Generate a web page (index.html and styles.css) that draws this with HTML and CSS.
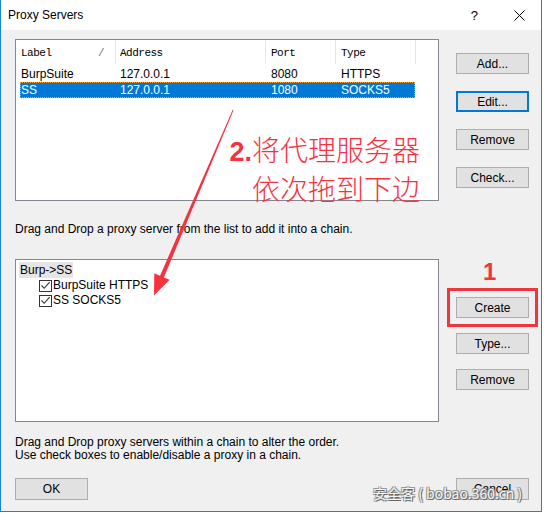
FILE: index.html
```html
<!DOCTYPE html>
<html>
<head>
<meta charset="utf-8">
<link rel="stylesheet" href="styles.css">
</head>
<body>
<div class="window">
  <div class="titlebar">
    <span class="title">Proxy Servers</span>
    <span class="help">?</span>
    <svg class="close" width="11" height="11" viewBox="0 0 11 11"><path d="M0.5 0.5 L10.5 10.5 M10.5 0.5 L0.5 10.5" stroke="#000" stroke-width="1" fill="none"/></svg>
  </div>
  <div class="client">
    <div class="row top">
      <div class="list list1">
        <div class="lv-header">
          <div class="hcol c1">Label<span class="sort">/</span></div>
          <div class="hcol c2">Address</div>
          <div class="hcol c3">Port</div>
          <div class="hcol c4">Type</div>
        </div>
        <div class="lv-row">
          <span>BurpSuite</span><span>127.0.0.1</span><span>8080</span><span>HTTPS</span>
        </div>
        <div class="lv-row selected">
          <span>SS</span><span>127.0.0.1</span><span>1080</span><span>SOCKS5</span>
        </div>
      </div>
      <div class="btncol btncol-top">
        <button class="btn">Add...</button>
        <button class="btn default">Edit...</button>
        <button class="btn">Remove</button>
        <button class="btn">Check...</button>
      </div>
    </div>
    <p class="hint hint1">Drag and Drop a proxy server from the list to add it into a chain.</p>
    <div class="row bottom">
      <div class="list list2">
        <div class="tree-node"><span class="node-label">Burp-&gt;SS</span></div>
        <div class="tree-child">
          <span class="cb"><svg width="11" height="11" viewBox="0 0 11 11"><path d="M1.5 5.5 L4.2 8.3 L9.6 2.2" stroke="#333" stroke-width="1.1" fill="none"/></svg></span>
          <span>BurpSuite HTTPS</span>
        </div>
        <div class="tree-child">
          <span class="cb"><svg width="11" height="11" viewBox="0 0 11 11"><path d="M1.5 5.5 L4.2 8.3 L9.6 2.2" stroke="#333" stroke-width="1.1" fill="none"/></svg></span>
          <span>SS SOCKS5</span>
        </div>
      </div>
      <div class="btncol btncol-bottom">
        <button class="btn create">Create</button>
        <button class="btn">Type...</button>
        <button class="btn">Remove</button>
      </div>
    </div>
    <div class="hint hint2">
      <div>Drag and Drop proxy servers within a chain to alter the order.</div>
      <div>Use check boxes to enable/disable a proxy in a chain.</div>
    </div>
    <div class="row footer">
      <button class="btn">OK</button>
      <button class="btn">Cancel</button>
    </div>
  </div>

  <svg class="arrow" width="544" height="513" viewBox="0 0 544 513">
    <polygon points="233.5,110.2 163.9,277.4 169.5,279.8 154,295.5 154.3,273.3 160.0,275.8 232.7,109.8" fill="#f5333f"/>
  </svg>
  <div class="note">
    <div><span class="num">2.</span>将代理服务器</div>
    <div>依次拖到下边</div>
  </div>
  <div class="note1">1</div>
  <div class="watermark">安全客 ( bobao.360.cn )</div>
</div>
</body>
</html>
```

FILE: styles.css
```css
* { box-sizing: border-box; }
html, body { margin: 0; padding: 0; background: #ffffff; }
body { font-family: "Liberation Sans", Arial, sans-serif; font-size: 12px; color: #000; }

.window {
  position: relative;
  width: 542px;
  height: 512px;
  border: 1px solid #1883d7;
  border-top: none;
  background: #f0f0f0;
  overflow: hidden;
}

.titlebar {
  height: 30px;
  background: #ffffff;
  display: flex;
  align-items: center;
  padding-left: 7px;
}
.title { font-size: 12px; flex: 1; }
.help { font-size: 13px; margin-right: 36px; }
.close { margin-right: 16px; }

.client { padding: 9px 0 0 14px; }

.row { display: flex; }

.list {
  width: 424px;
  background: #ffffff;
  border: 1px solid #828790;
}
.list1 { height: 162px; }
.list2 { height: 163px; padding-top: 2px; }

.btncol { display: flex; flex-direction: column; margin-left: 17px; }
.btncol-top { padding-top: 14px; gap: 17px; }
.btncol-bottom { padding-top: 38px; gap: 15px; }

.btn {
  width: 73px;
  height: 21px;
  background: #e1e1e1;
  border: 1px solid #adadad;
  font-family: "Liberation Sans", Arial, sans-serif;
  font-size: 12px;
  color: #000;
  padding: 0;
  margin: 0;
}
.btn.default { border: 2px solid #0078d7; }

.lv-header { display: flex; height: 24px; }
.hcol {
  position: relative;
  font-family: "Liberation Mono", monospace;
  font-size: 11px;
  letter-spacing: -0.5px;
  padding-left: 6px;
  padding-top: 7px;
  border-right: 1px solid #e5e5e5;
  height: 24px;
}
.hcol.c1 { width: 100px; padding-left: 5px; }
.hcol.c2 { width: 150px; padding-left: 4px; }
.hcol.c3 { width: 70px; padding-left: 5px; }
.hcol.c4 { width: 80px; padding-left: 5px; }
.sort { position: absolute; left: 82px; top: 7px; color: #777; }

.lv-row {
  display: grid;
  grid-template-columns: 99px 151px 70px 1fr;
  width: 395px;
  height: 16px;
  margin-left: 4px;
  padding-left: 1px;
  line-height: 16px;
  font-size: 12px;
}
.lv-header + .lv-row { margin-top: 2px; }
.lv-row.selected {
  background: #0078d7;
  color: #ffffff;
  outline: 1px dotted #f3a033;
  outline-offset: -1px;
}

.hint { margin: 0; line-height: 16px; font-size: 12px; }
.hint1 { margin-top: 20px; margin-bottom: 22px; }
.hint2 { margin-top: 14px; line-height: 13px; }

.tree-node { height: 16px; padding-left: 3px; }
.node-label { display: inline-block; background: #e5e5e5; padding: 0 1px; line-height: 16px; }
.tree-child {
  display: flex;
  align-items: center;
  height: 15px;
  padding-left: 23px;
  line-height: 15px;
}
.cb {
  width: 13px;
  height: 12px;
  border: 1px solid #333;
  background: #fff;
  display: inline-flex;
  align-items: center;
  justify-content: center;
  margin-right: 1px;
}

.footer { margin-top: 16px; justify-content: space-between; width: 514px; }
.footer .btn { height: 22px; }

.create { outline: 3px solid #f0353f; outline-offset: 6px; }

.arrow { position: absolute; left: -1px; top: 0; pointer-events: none; }

.note {
  position: absolute;
  left: 219px;
  top: 131px;
  width: 200px;
  text-align: right;
  color: #f5333f;
  font-family: "Noto Sans CJK SC", sans-serif;
  font-weight: 300;
  font-size: 28px;
  line-height: 36px;
  white-space: nowrap;
}
.num { font-family: "Liberation Sans", Arial, sans-serif; font-weight: bold; font-size: 27px; }

.note1 {
  position: absolute;
  left: 482px;
  top: 258px;
  color: #f5333f;
  font-family: "Liberation Sans", Arial, sans-serif;
  font-weight: bold;
  font-size: 24px;
  line-height: 28px;
}

.watermark {
  position: absolute;
  left: 372px;
  top: 484px;
  font-family: "Noto Sans CJK SC", "Liberation Sans", sans-serif;
  font-size: 14px;
  line-height: 18px;
  color: #f4f4f4;
  text-shadow: 1px 1px 0 #666, -1px -1px 0 #999, 1px -1px 0 #999, -1px 1px 0 #999;
  white-space: nowrap;
}
```
